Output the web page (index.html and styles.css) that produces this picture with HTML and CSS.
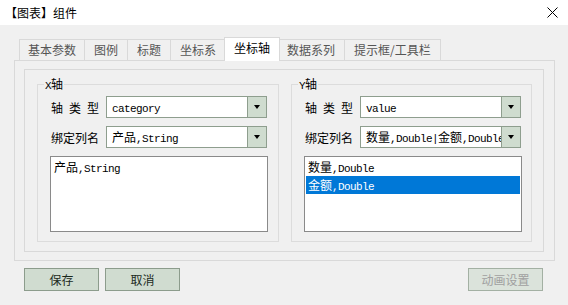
FILE: index.html
```html
<!DOCTYPE html>
<html lang="zh">
<head>
    <meta charset="UTF-8">
    <title>【图表】组件</title>
    <link rel="stylesheet" href="styles.css">
</head>
<body>
    <div class="titlebar">
        <span class="title">【图表】组件</span>
        <svg class="close" width="11" height="11" viewBox="0 0 11 11">
            <path d="M0.5 0.5L10.5 10.5M10.5 0.5L0.5 10.5" stroke="#000" stroke-width="1" fill="none"/>
        </svg>
    </div>

    <div class="dialog">
        <div class="tabs">
            <div class="tab">基本参数</div>
            <div class="tab">图例</div>
            <div class="tab">标题</div>
            <div class="tab">坐标系</div>
            <div class="tab active">坐标轴</div>
            <div class="tab">数据系列</div>
            <div class="tab">提示框/工具栏</div>
        </div>

        <div class="panel">
            <div class="inner">
                <!-- X axis -->
                <div class="group group-x">
                    <div class="group-title"><span class="en">X</span>轴</div>
                    <div class="form-row">
                        <label class="label">轴&ensp;类&ensp;型</label>
                        <div class="combo">
                            <div class="combo-text"><span class="en">category</span></div>
                            <div class="combo-btn"><span class="arrow"></span></div>
                        </div>
                    </div>
                    <div class="form-row">
                        <label class="label">绑定列名</label>
                        <div class="combo">
                            <div class="combo-text">产品<span class="en">,String</span></div>
                            <div class="combo-btn"><span class="arrow"></span></div>
                        </div>
                    </div>
                    <div class="listbox">
                        <div class="item">产品<span class="en">,String</span></div>
                    </div>
                </div>

                <!-- Y axis -->
                <div class="group group-y">
                    <div class="group-title"><span class="en">Y</span>轴</div>
                    <div class="form-row">
                        <label class="label">轴&ensp;类&ensp;型</label>
                        <div class="combo">
                            <div class="combo-text"><span class="en">value</span></div>
                            <div class="combo-btn"><span class="arrow"></span></div>
                        </div>
                    </div>
                    <div class="form-row">
                        <label class="label">绑定列名</label>
                        <div class="combo">
                            <div class="combo-text">数量<span class="en">,Double|</span>金额<span class="en">,Double</span></div>
                            <div class="combo-btn"><span class="arrow"></span></div>
                        </div>
                    </div>
                    <div class="listbox">
                        <div class="item">数量<span class="en">,Double</span></div>
                        <div class="item selected">金额<span class="en">,Double</span></div>
                    </div>
                </div>
            </div>
        </div>

        <div class="buttons">
            <button class="btn">保存</button>
            <button class="btn">取消</button>
            <button class="btn disabled" disabled>动画设置</button>
        </div>
    </div>
</body>
</html>
```

FILE: styles.css
```css
body {
    margin: 0;
    width: 568px;
    height: 305px;
    overflow: hidden;
    background-color: #f0f0f0;
    color: #000;
    font-family: "Noto Sans CJK SC", sans-serif;
    font-size: 12px;
}

/* window title */
.titlebar {
    height: 25px;
    background-color: #ffffff;
    display: flex;
    align-items: center;
    justify-content: space-between;
    padding-left: 5px;
    padding-right: 10px;
}

.title {
    font-size: 12px;
    line-height: 16px;
}

.close {
    display: block;
}

.dialog {
    padding: 12px 13px 0 14px;
}

/* tab strip */
.tabs {
    display: flex;
    align-items: flex-end;
    height: 23px;
    padding-left: 5px;
}

.tab {
    height: 21px;
    box-sizing: border-box;
    padding: 0 9px;
    line-height: 20px;
    border: 1px solid #d9d9d9;
    border-bottom: none;
    margin-left: -1px;
    color: #555;
    background-color: #f0f0f0;
}

.tab:first-child {
    margin-left: 0;
    padding: 0 8px;
}

.tab.active {
    height: 24px;
    line-height: 20px;
    margin: 0 -2px -1px -2px;
    background-color: #ffffff;
    color: #000;
    position: relative;
    z-index: 1;
}

/* panels */
.panel {
    width: 541px;
    height: 201px;
    box-sizing: border-box;
    border: 1px solid #d9d9d9;
    padding: 8px 10px 8px 9px;
}

.inner {
    height: 183px;
    box-sizing: border-box;
    border: 1px solid #d9d9d9;
    display: flex;
    gap: 12px;
    padding: 14px 0 0 12px;
}

.group {
    height: 158px;
    box-sizing: border-box;
    border: 1px solid #dcdcdc;
    padding: 0 0 0 12px;
}

.group-x {
    width: 242px;
}

.group-y {
    width: 241px;
}

.group-title {
    width: fit-content;
    height: 14px;
    line-height: 14px;
    margin: -8px 0 0 -6px;
    padding: 0 1px;
    background-color: #f0f0f0;
}

.en {
    font-family: "Liberation Mono", monospace;
    font-size: 11px;
    letter-spacing: -0.6px;
}

.form-row {
    display: flex;
    align-items: center;
    height: 22px;
    margin-top: 8px;
}

.group-title + .form-row {
    margin-top: 5px;
}

.label {
    width: 50px;
    margin-right: 6px;
    text-align: center;
    font-size: 12px;
    white-space: nowrap;
}

.combo {
    width: 161px;
    height: 22px;
    box-sizing: border-box;
    border: 1px solid #8e9e8e;
    background-color: #ffffff;
    display: flex;
}

.combo-text {
    flex: 1;
    padding-left: 5px;
    line-height: 20px;
    white-space: nowrap;
    overflow: hidden;
}

.combo-btn {
    width: 18px;
    border-left: 1px solid #8e9e8e;
    background-color: #cfdccf;
    display: flex;
    align-items: center;
    justify-content: center;
}

.arrow {
    width: 0;
    height: 0;
    border-left: 3.5px solid transparent;
    border-right: 3.5px solid transparent;
    border-top: 4px solid #000;
}

.listbox {
    width: 218px;
    height: 76px;
    box-sizing: border-box;
    margin-top: 8px;
    border: 1px solid #8a8a8a;
    background-color: #ffffff;
    padding: 1px;
}

.item {
    height: 18px;
    line-height: 18px;
    padding-left: 2px;
    white-space: nowrap;
}

.item.selected {
    background-color: #0078d7;
    color: #ffffff;
}

/* bottom buttons */
.buttons {
    display: flex;
    gap: 6px;
    padding: 7px 12px 0 10px;
}

.btn {
    width: 75px;
    height: 23px;
    border: 1px solid #8c9c8c;
    background-color: #d0dcd0;
    color: #1c2a1c;
    font-family: "Noto Sans CJK SC", sans-serif;
    font-size: 12px;
    padding: 0;
}

.btn.disabled {
    margin-left: auto;
    background-color: #dbe3db;
    border-color: #a3b0a3;
    color: #a0a0a0;
}
```
